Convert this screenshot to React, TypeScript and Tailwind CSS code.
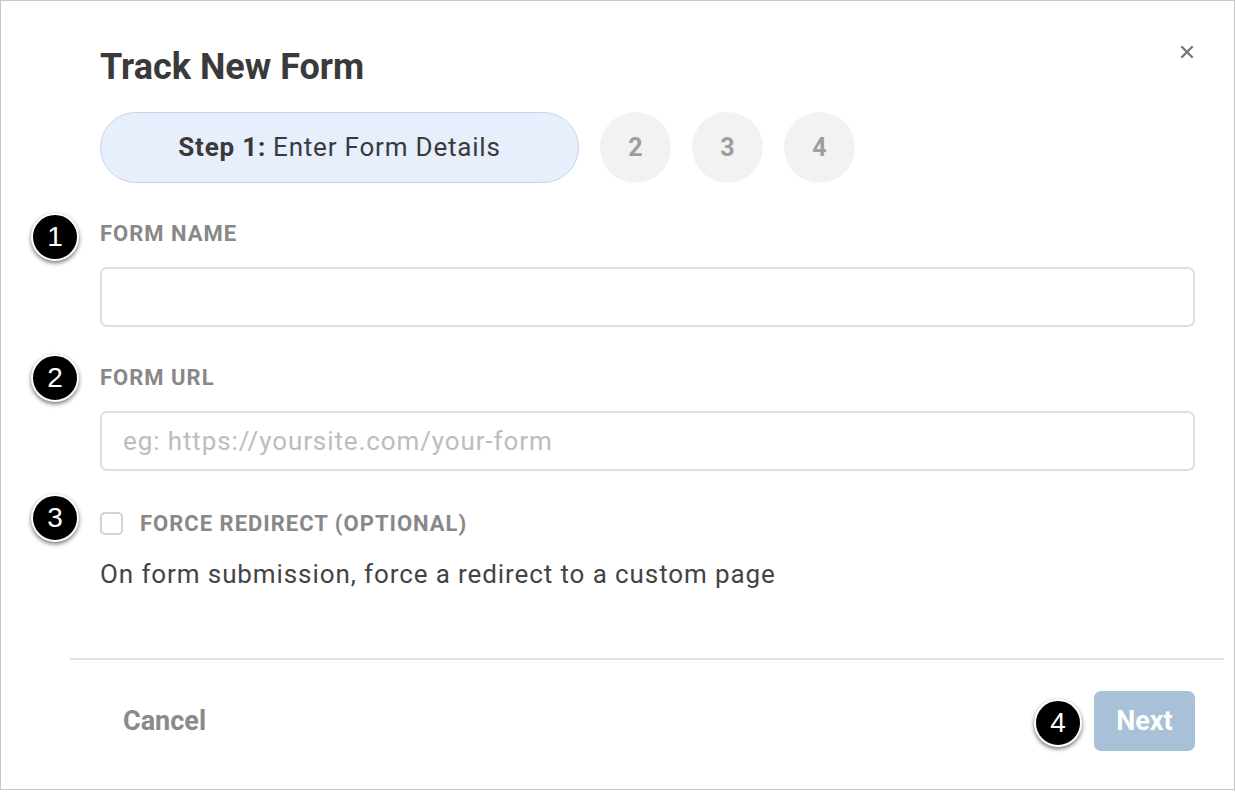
import React from "react";

function Badge({ n, className }: { n: string; className: string }) {
  return (
    <div
      className={`absolute w-[48px] h-[48px] rounded-full bg-black border-2 border-white shadow-[0_2px_4px_rgba(0,0,0,0.55)] flex items-center justify-center text-white text-[28px] leading-none ${className}`}
      style={{ fontFamily: '"Liberation Sans", Arial, sans-serif' }}
    >
      {n}
    </div>
  );
}

export default function App() {
  return (
    <div
      className="relative w-[1235px] h-[790px] bg-white border border-[#c8c8c8] overflow-hidden"
      style={{ fontFamily: 'Roboto, "Noto Sans", sans-serif' }}
    >
      {/* close */}
      <button className="absolute left-[1179px] top-[44px] w-[14px] h-[14px]">
        <svg viewBox="0 0 14 14" className="w-[14px] h-[14px]">
          <path d="M2 2 L12 12 M12 2 L2 12" stroke="#777" strokeWidth="2.4" strokeLinecap="round" />
        </svg>
      </button>

      <div className="pl-[99px] pr-[39px] pt-[46px]">
        <h1 className="text-[36px] leading-[40px] font-bold text-[#3a3a3a]">Track New Form</h1>

        <div className="mt-[25px] flex items-center gap-[21px]">
          <div className="w-[479px] h-[71px] rounded-full bg-[#e7eefc] border border-[#c9d4ea] flex items-center justify-center text-[26px] tracking-[0.8px] text-[#3a3a3a]">
            <span className="font-bold">Step 1:</span>
            <span className="ml-[7px]">Enter Form Details</span>
          </div>
          {["2", "3", "4"].map((s) => (
            <div
              key={s}
              className="w-[71px] h-[71px] rounded-full bg-[#f2f2f2] flex items-center justify-center text-[25px] font-bold text-[#9e9e9e]"
            >
              {s}
            </div>
          ))}
        </div>

        <div className="mt-[39px] text-[22px] leading-[24px] font-bold tracking-[1px] text-[#888]">FORM NAME</div>
        <div className="mt-[21px] h-[60px] rounded-[7px] border-2 border-[#dedede]" />

        <div className="mt-[39px] text-[22px] leading-[24px] font-bold tracking-[1px] text-[#888]">FORM URL</div>
        <div className="mt-[21px] h-[60px] rounded-[7px] border-2 border-[#dedede] flex items-center pl-[21px] text-[26px] tracking-[0.9px] text-[#bdbdbd]">
          eg: https://yoursite.com/your-form
        </div>

        <div className="mt-[41px] flex items-center h-[23px]">
          <div className="w-[23px] h-[23px] rounded-[5px] border-2 border-[#d2d2d2] bg-white" />
          <span className="ml-[17px] text-[22px] font-bold tracking-[1px] text-[#888]">FORCE REDIRECT (OPTIONAL)</span>
        </div>
        <p className="mt-[23px] text-[26px] leading-[32px] tracking-[0.9px] text-[#444]">
          On form submission, force a redirect to a custom page
        </p>
      </div>

      <div className="mt-[68px] ml-[69px] mr-[10px] h-[2px] bg-[#e2e2e2]" />

      <div className="flex items-center justify-between pl-[122px] pr-[39px] mt-[31px]">
        <span className="text-[27px] font-bold text-[#8a8a8a]">Cancel</span>
        <button className="w-[101px] h-[60px] rounded-[7px] bg-[#a9c0d9] text-white text-[27px] font-bold">
          Next
        </button>
      </div>

      <Badge n="1" className="left-[30px] top-[212px]" />
      <Badge n="2" className="left-[30px] top-[353px]" />
      <Badge n="3" className="left-[30px] top-[493px]" />
      <Badge n="4" className="left-[1033px] top-[698px]" />
    </div>
  );
}
